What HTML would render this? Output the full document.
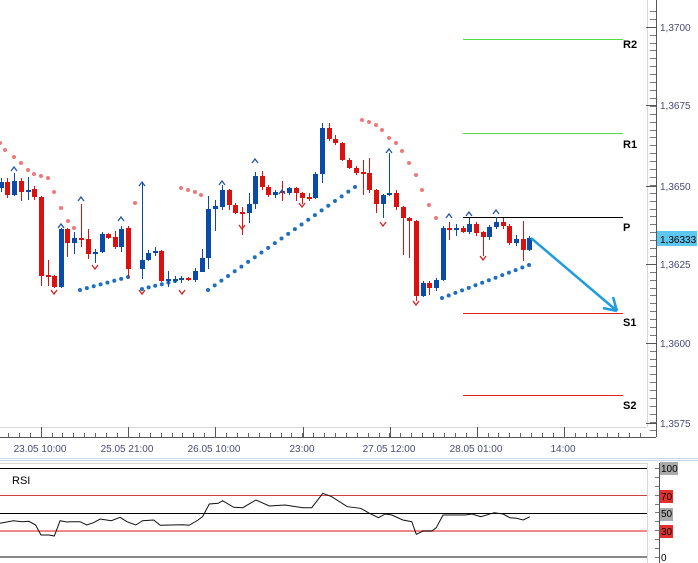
<!DOCTYPE html>
<html><head><meta charset="utf-8"><style>
body{margin:0;width:698px;height:563px;overflow:hidden;background:#fff;font-family:"Liberation Sans",sans-serif}
svg{position:absolute;left:0;top:0}
</style></head><body>
<svg id="s" width="698" height="563" xmlns="http://www.w3.org/2000/svg" shape-rendering="crispEdges"></svg>
<script>
var o=[];
function L(x1,y1,x2,y2,c,w){o.push('<line x1="'+x1+'" y1="'+y1+'" x2="'+x2+'" y2="'+y2+'" stroke="'+c+'" stroke-width="'+(w||1)+'"/>');}
function R(x,y,w,h,c){o.push('<rect x="'+x+'" y="'+y+'" width="'+w+'" height="'+h+'" fill="'+c+'"/>');}
function T(x,y,t,c,s,a,wt){o.push('<text x="'+x+'" y="'+y+'" fill="'+c+'" font-size="'+s+'" text-anchor="'+(a||'start')+'" font-weight="'+(wt||'normal')+'" font-family="Liberation Sans, sans-serif">'+t+'</text>');}
L(647.5,0,647.5,427,'#d8d8d8');L(0,427.5,647,427.5,'#d8d8d8');
L(656.5,0,656.5,437,'#555');
var P=[[27,'1,3700'],[105,'1,3675'],[186,'1,3650'],[264,'1,3625'],[343,'1,3600'],[423,'1,3575']];
for(var y=11;y<437;y+=7.9){L(650,Math.round(y)+.5,656,Math.round(y)+.5,'#777');}
P.forEach(function(p){L(646,p[0]+.5,656,p[0]+.5,'#555');T(660,p[0]+4,p[1],'#4a4a78',10);});
L(0,437.5,656,437.5,'#555');
for(var x=8;x<647;x+=10.9){L(Math.round(x)+.5,433,Math.round(x)+.5,437,'#666');}
[[41,'23.05 10:00'],[128,'25.05 21:00'],[215,'26.05 10:00'],[303,'23:00'],[390,'27.05 12:00'],[477,'28.05 01:00'],[564,'14:00']].forEach(function(t){L(t[0]+.5,427,t[0]+.5,437,'#555');T(t[0]-1,452,t[1],'#4a4a78',10,'middle');});
R(0,458,698,1,'#c8d4e8');R(0,460,698,1,'#c8d4e8');
R(463,39,160,1,'#55dd44');R(463,133,160,1,'#55dd44');R(463,217,160,1,'#000');R(463,313,160,1,'#e02020');R(463,395,160,1,'#e02020');
[[44,'R2'],[144,'R1'],[227,'P'],[322,'S1'],[405,'S2']].forEach(function(t){T(623,t[0]+4,t[1],'#000',11,'start','bold');});
function D(x,y,c){o.push('<circle shape-rendering="auto" cx="'+x+'" cy="'+y+'" r="2" fill="'+c+'"/>');}
[[0,143],[5,150],[14,157],[21,163],[28,170],[34,174],[41,176],[48,178],[54,192],[61,208],[68,221],[74,228],[135,203],[181,188],[188,190],[195,192],[201,195],[362,120],[369,122],[376,125],[382,130],[389,138],[396,143],[402,151],[409,163],[416,175],[422,190],[429,205],[436,218]].forEach(function(d){D(d[0],d[1],'#f07878');});
function BL(x1,y1,x2,y2,n){for(var i=0;i<n;i++){D(x1+(x2-x1)*i/(n-1),y1+(y2-y1)*i/(n-1),'#1e6fc0');}}
BL(80,290,128,277,8);BL(142,289,175,281,6);BL(208,290,355,187,23);BL(442,298,529,265,14);
var C=[[1,188,182,178,192],[7,182,195,178,198],[14,195,181,173,196],[21,181,192,178,201],[28,191,190,177,200],[34,189,197,186,200],[41,197,276,196,286],[48,275,277,260,286],[54,276,287,275,288],[61,287,229,228,288],[67,229,243,228,257],[74,243,238,232,254],[81,238,239,204,247],[88,239,254,229,259],[95,254,252,249,263],[102,252,234,232,253],[108,234,238,233,239],[115,237,247,231,249],[121,247,229,226,252],[128,228,269,226,278],[142,269,260,183,279],[148,260,253,250,261],[155,253,251,247,256],[161,251,281,250,282],[168,281,279,271,287],[175,280,279,276,283],[181,279,278,276,283],[188,278,280,277,281],[195,280,271,268,282],[202,272,258,249,272],[208,258,209,196,269],[215,209,206,200,231],[222,207,190,185,210],[229,190,205,189,210],[235,205,213,203,214],[242,212,213,207,235],[249,213,204,193,223],[255,204,176,172,209],[262,176,187,171,190],[268,187,195,185,197],[275,195,192,190,198],[282,191,192,181,201],[289,193,188,187,195],[296,188,193,187,201],[302,193,198,192,204],[309,197,198,193,201],[315,198,174,172,199],[322,174,128,123,183],[329,128,139,123,141],[335,139,143,135,145],[342,143,160,142,161],[349,160,168,158,169],[356,168,173,166,175],[363,172,173,160,195],[369,173,190,158,193],[376,190,204,189,213],[383,204,195,194,218],[389,195,193,153,196],[396,193,207,190,210],[403,207,218,206,255],[409,218,221,217,258],[416,221,296,220,301],[423,296,283,281,297],[429,283,288,281,295],[436,288,280,278,291],[443,280,228,226,281],[449,228,230,222,240],[456,230,228,224,236],[463,228,232,226,233],[469,232,224,218,234],[476,224,233,222,236],[483,232,237,231,256],[489,237,227,225,240],[496,227,222,217,229],[503,222,226,218,229],[509,226,243,224,245],[516,243,239,235,246],[523,239,250,221,261],[529,250,238,236,251]];
C.forEach(function(c){var col=c[2]<c[1]?'#0a4aa8':'#dd1010';var x=c[0];L(x+.5,c[3],x+.5,c[4],col);var t=Math.min(c[1],c[2]),h=Math.max(2,Math.abs(c[2]-c[1]));R(x-2,t,5,h,col);});
function UP(x,y){o.push('<path shape-rendering="auto" d="M'+(x-3)+' '+(y+3)+'L'+x+' '+(y-1)+'L'+(x+3)+' '+(y+3)+'" fill="none" stroke="#2255aa" stroke-width="1.3"/>');}
function DN(x,y){o.push('<path shape-rendering="auto" d="M'+(x-3)+' '+(y-3)+'L'+x+' '+(y+1)+'L'+(x+3)+' '+(y-3)+'" fill="none" stroke="#d82020" stroke-width="1.3"/>');}
[[14,168],[61,225],[81,198],[121,218],[142,183],[222,182],[255,160],[282,191],[389,150],[469,213],[496,211],[449,215]].forEach(function(a){UP(a[0],a[1]);});
[[54,293],[95,268],[142,293],[182,293],[242,228],[302,206],[383,225],[416,304],[483,259]].forEach(function(a){DN(a[0],a[1]);});
o.push('<path shape-rendering="auto" d="M531 238L617 311M617 311L603 308M617 311L613 297" stroke="#1e9ce0" stroke-width="2.5" fill="none"/>');
R(657,231,40,15,'#5cc8f0');T(660,243,'1,36333','#000',10);
L(0,463.5,647,463.5,'#d8d8d8');L(647.5,463,647.5,563,'#d8d8d8');
R(0,468,647,1,'#000');R(0,495,647,1,'#d04040');R(0,513,647,1,'#000');R(0,530,647,2,'#f08888');R(0,556,647,2,'#888');
L(659.5,463,659.5,563,'#555');
for(var y=468;y<560;y+=8.9){L(655,Math.round(y)+.5,659,Math.round(y)+.5,'#777');}
R(660,462,18,13,'#aaa');T(661,472,'100','#000',10);
R(660,490,13,13,'#e03030');T(661,500,'70','#000',10);
R(660,508,13,13,'#aaa');T(661,517,'50','#000',10);
R(660,525,13,13,'#e03030');T(661,535,'30','#000',10);
T(661,561,'0','#000',10);
T(12,484,'RSI','#000',11);
var Q=[[0,370],[30,362],[50,365],[65,364],[80,375],[92,405],[110,405],[122,408],[135,362],[150,366],[160,365],[180,365],[195,375],[210,368],[225,357],[250,362],[270,352],[285,365],[305,375],[320,362],[345,360],[360,376],[385,375],[410,374],[425,376],[445,360],[455,350],[470,312],[490,310],[500,302],[525,322],[545,323],[575,300],[605,318],[640,315],[680,323],[700,323],[725,280],[745,290],[780,320],[810,325],[830,340],[850,353],[865,342],[880,345],[905,360],[925,365],[935,403],[950,393],[970,393],[980,383],[995,345],[1045,345],[1060,342],[1080,350],[1110,338],[1130,342],[1145,353],[1160,355],[1175,360],[1190,350]];
o.push('<polyline shape-rendering="auto" fill="none" stroke="#111" stroke-width="1" points="'+Q.map(function(q){return (q[0]/2.246).toFixed(1)+','+(400+q[1]/3).toFixed(1);}).join(' ')+'"/>');
document.getElementById('s').innerHTML=o.join('');
</script>
</body></html>
